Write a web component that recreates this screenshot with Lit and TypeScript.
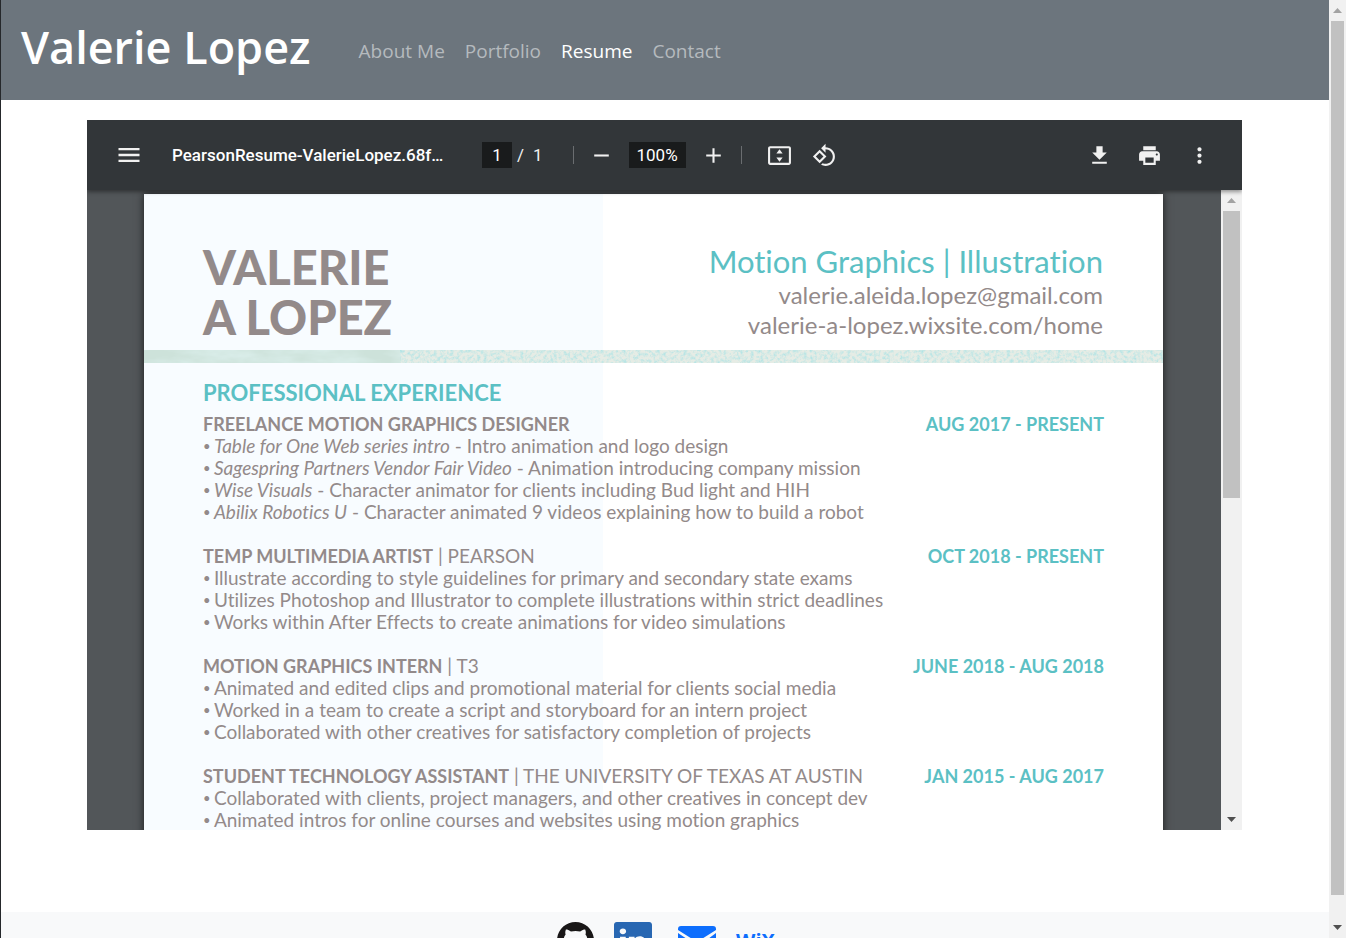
import { LitElement, html, css, svg } from "lit";
import { customElement, property } from "lit/decorators.js";

interface Bullet {
  lead?: string;
  text: string;
}

interface Job {
  title: string;
  place?: string;
  dates: string;
  bullets: Bullet[];
}

const NAV = ["About Me", "Portfolio", "Resume", "Contact"];

const JOBS: Job[] = [
  {
    title: "FREELANCE MOTION GRAPHICS DESIGNER",
    dates: "AUG 2017 - PRESENT",
    bullets: [
      { lead: "Table for One Web series intro", text: "Intro animation and logo design" },
      { lead: "Sagespring Partners Vendor Fair Video", text: "Animation introducing company mission" },
      { lead: "Wise Visuals", text: "Character animator for clients including Bud light and HIH" },
      { lead: "Abilix Robotics U", text: "Character animated 9 videos explaining how to build a robot" },
    ],
  },
  {
    title: "TEMP MULTIMEDIA ARTIST",
    place: "PEARSON",
    dates: "OCT 2018 - PRESENT",
    bullets: [
      { text: "Illustrate according to style guidelines for primary and secondary state exams" },
      { text: "Utilizes Photoshop and Illustrator to complete illustrations within strict deadlines" },
      { text: "Works within After Effects to create animations for video simulations" },
    ],
  },
  {
    title: "MOTION GRAPHICS INTERN",
    place: "T3",
    dates: "JUNE 2018 - AUG 2018",
    bullets: [
      { text: "Animated and edited clips and promotional material for clients social media" },
      { text: "Worked in a team to create a script and storyboard for an intern project" },
      { text: "Collaborated with other creatives for satisfactory completion of projects" },
    ],
  },
  {
    title: "STUDENT TECHNOLOGY ASSISTANT",
    place: "THE UNIVERSITY OF TEXAS AT AUSTIN",
    dates: "JAN 2015 - AUG 2017",
    bullets: [
      { text: "Collaborated with clients, project managers, and other creatives in concept dev" },
      { text: "Animated intros for online courses and websites using motion graphics" },
    ],
  },
];

const icon = (d: string, size = 25) =>
  html`<svg width=${size} height=${size} viewBox="0 0 24 24" fill="currentColor" aria-hidden="true">${svg`<path d=${d} />`}</svg>`;

const ICONS = {
  menu: "M3 18h18v-2H3v2zm0-5h18v-2H3v2zm0-7v2h18V6H3z",
  minus: "M19 13H5v-2h14v2z",
  plus: "M19 13h-6v6h-2v-6H5v-2h6V5h2v6h6v2z",
  fit: "M21 3H3c-1.1 0-2 .9-2 2v14c0 1.100.9 2 2 2h18c1.100 0 2-.9 2-2V5c0-1.100-.9-2-2-2zm0 16H3V5h18v14zM12 6l-3 4h6zM12 18l3-4H9z",
  rotate:
    "M7.34 6.41L.86 12.9l6.49 6.48 6.49-6.48-6.5-6.49zM3.69 12.9l3.66-3.66L11 12.9l-3.66 3.66-3.65-3.66zm15.67-6.26C17.61 4.88 15.3 4 13 4V.76L8.76 5 13 9.24V6c1.79 0 3.58.68 4.95 2.05 2.73 2.73 2.73 7.17 0 9.9C16.58 19.32 14.79 20 13 20c-.97 0-1.94-.21-2.84-.61l-1.49 1.49C10.02 21.62 11.51 22 13 22c2.3 0 4.61-.88 6.36-2.64 3.52-3.51 3.52-9.21 0-12.72z",
  download: "M19 9h-4V3H9v6H5l7 7 7-7zM5 18v2h14v-2H5z",
  print:
    "M19 8H5c-1.66 0-3 1.34-3 3v6h4v4h12v-4h4v-6c0-1.66-1.34-3-3-3zm-3 11H8v-5h8v5zm3-7c-.55 0-1-.45-1-1s.45-1 1-1 1 .45 1 1-.45 1-1 1zm-1-9H6v4h12V3z",
  more: "M12 8c1.100 0 2-.9 2-2s-.9-2-2-2-2 .9-2 2 .9 2 2 2zm0 2c-1.100 0-2 .9-2 2s.9 2 2 2 2-.9 2-2-.9-2-2-2zm0 6c-1.100 0-2 .9-2 2s.9 2 2 2 2-.9 2-2-.9-2-2-2z",
};

@customElement("scroll-rail")
class ScrollRail extends LitElement {
  @property({ type: Number }) visible = 50;

  static styles = css`
    :host {
      display: flex;
      flex-direction: column;
      background: #f1f1f1;
    }
    .arrow {
      flex: none;
      height: 21px;
      display: grid;
      place-items: center;
      color: #505050;
    }
    .arrow.off {
      color: #a3a3a3;
    }
    .track {
      flex: 1;
      min-height: 0;
      padding: 0 2px;
    }
    .thumb {
      background: #c1c1c1;
    }
  `;

  render() {
    return html`
      <div class="arrow off">
        <svg width="9" height="5" viewBox="0 0 9 5" fill="currentColor"><path d="M4.500 0L9 5H0z" /></svg>
      </div>
      <div class="track"><div class="thumb" style="height:${this.visible}%"></div></div>
      <div class="arrow">
        <svg width="9" height="5" viewBox="0 0 9 5" fill="currentColor"><path d="M4.500 5L0 0h9z" /></svg>
      </div>
    `;
  }
}

@customElement("resume-page")
class ResumePage extends LitElement {
  static styles = css`
    :host {
      display: block;
      background: linear-gradient(90deg, #f8fcff 45%, #ffffff 45%);
      color: #938a8a;
      font-family: "Lato", sans-serif;
      font-size: 19px;
      line-height: 22px;
      font-variant-ligatures: none;
    }
    .top {
      display: flex;
      justify-content: space-between;
      padding: 48px 60px 8px 59px;
    }
    h1 {
      margin: 0;
      font-size: 47px;
      line-height: 50px;
      font-weight: 900;
    }
    .contact {
      text-align: right;
      font-size: 24px;
      line-height: 30px;
    }
    .role {
      margin: 0;
      font-size: 31px;
      line-height: 38px;
      color: #5bc0c4;
    }
    .contact div {
      white-space: nowrap;
    }
    .band {
      display: block;
      width: 100%;
      height: 13px;
    }
    .body {
      padding: 16px 59px 0;
    }
    h2 {
      margin: 0 0 6px;
      font-size: 22px;
      line-height: 28px;
      font-weight: 700;
      color: #5bc0c4;
    }
    section {
      margin-bottom: 22px;
    }
    .head {
      display: flex;
      justify-content: space-between;
      height: 22px;
    }
    h3 {
      margin: 0;
      font-size: 19px;
      font-weight: 400;
    }
    h3 b,
    .dates {
      font-size: 18px;
      font-weight: 700;
    }
    .dates {
      color: #5bc0c4;
    }
    ul {
      margin: 0;
      padding: 0;
      list-style: none;
    }
    li {
      white-space: nowrap;
    }
    li::before {
      content: "• ";
      font-size: 13px;
      line-height: 0;
      vertical-align: 2px;
    }
  `;

  render() {
    return html`
      <div class="top">
        <h1>VALERIE<br />A LOPEZ</h1>
        <div class="contact">
          <p class="role">Motion Graphics | Illustration</p>
          <div>valerie.aleida.lopez@gmail.com</div>
          <div>valerie-a-lopez.wixsite.com/home</div>
        </div>
      </div>
      <svg class="band" aria-hidden="true">
        <filter id="grain" x="0" y="0" width="100%" height="100%">
          <feTurbulence type="fractalNoise" baseFrequency="0.3" numOctaves="4" seed="4" />
          <feColorMatrix values="0 0 0 0 0.42  0 0 0 0 0.77  0 0 0 0 0.78  2 0 0 0 -0.8" />
        </filter>
        <filter id="wash" x="0" y="0" width="100%" height="100%">
          <feTurbulence type="fractalNoise" baseFrequency="0.02 0.06" numOctaves="4" seed="9" />
          <feColorMatrix values="0 0 0 0 0.72  0 0 0 0 0.87  0 0 0 0 0.85  2 0 0 0 -0.6" />
        </filter>
        <rect width="100%" height="13" fill="#e6ece5" />
        <rect width="25.200%" height="13" fill="#cde2da" />
        <rect width="25.200%" height="13" filter="url(#wash)" />
        <rect x="25.200%" width="74.800%" height="13" filter="url(#grain)" />
      </svg>
      <div class="body">
        <h2>PROFESSIONAL EXPERIENCE</h2>
        ${JOBS.map(
          (job) => html`
            <section>
              <div class="head">
                <h3><b>${job.title}</b>${job.place ? html` | ${job.place}` : ""}</h3>
                <span class="dates">${job.dates}</span>
              </div>
              <ul>
                ${job.bullets.map((b) => html`<li>${b.lead ? html`<i>${b.lead}</i> - ` : ""}${b.text}</li>`)}
              </ul>
            </section>
          `
        )}
      </div>
    `;
  }
}

@customElement("pdf-viewer")
class PdfViewer extends LitElement {
  static styles = css`
    :host {
      display: flex;
      flex-direction: column;
      overflow: hidden;
      background: #525659;
      font-family: "Roboto", sans-serif;
    }
    .bar {
      position: relative;
      z-index: 1;
      flex: none;
      height: 70px;
      box-sizing: border-box;
      padding: 0 30px 0 28px;
      display: flex;
      align-items: center;
      justify-content: space-between;
      background: #323639;
      color: #f1f1f1;
      font-size: 17px;
      box-shadow: 0 2px 4px rgba(0, 0, 0, 0.4);
    }
    .group,
    .pages,
    .zoom {
      display: flex;
      align-items: center;
    }
    button {
      display: grid;
      place-items: center;
      padding: 0;
      border: 0;
      background: none;
      color: inherit;
    }
    .name {
      width: 278px;
      margin: 0 32px 0 29px;
      font-weight: 500;
      color: #ffffff;
      white-space: nowrap;
    }
    input {
      box-sizing: border-box;
      height: 26px;
      padding: 0;
      border: 0;
      background: #191b1c;
      color: #ffffff;
      font: inherit;
      text-align: center;
    }
    .page {
      width: 30px;
    }
    .level {
      width: 57px;
    }
    .pages {
      gap: 5px;
    }
    .total {
      padding-left: 4px;
    }
    .rule {
      width: 1px;
      height: 18px;
      margin: 0 15px 0 30px;
      background: #6a6d70;
    }
    .zoom {
      gap: 15px;
    }
    .zoom + .rule {
      margin: 0 25px 0 15px;
    }
    .view {
      gap: 20px;
    }
    .actions {
      gap: 25px;
    }
    .stage {
      flex: 1;
      min-height: 0;
      display: flex;
    }
    .canvas {
      flex: 1;
      min-width: 0;
      overflow: hidden;
      padding: 4px 58px 0 57px;
    }
    resume-page {
      min-height: 1300px;
      box-shadow: 0 0 8px rgba(0, 0, 0, 0.7);
    }
    scroll-rail {
      width: 21px;
    }
  `;

  render() {
    return html`
      <div class="bar">
        <div class="group">
          <button aria-label="Menu">${icon(ICONS.menu, 28)}</button>
          <div class="name">PearsonResume-ValerieLopez.68f…</div>
          <div class="pages">
            <input class="page" aria-label="Page number" value="1" />
            <span>/</span>
            <span class="total">1</span>
          </div>
          <span class="rule"></span>
          <div class="zoom">
            <button aria-label="Zoom out">${icon(ICONS.minus)}</button>
            <input class="level" aria-label="Zoom level" value="100%" />
            <button aria-label="Zoom in">${icon(ICONS.plus)}</button>
          </div>
          <span class="rule"></span>
          <div class="group view">
            <button aria-label="Fit to page">${icon(ICONS.fit)}</button>
            <button aria-label="Rotate">${icon(ICONS.rotate)}</button>
          </div>
        </div>
        <div class="group actions">
          <button aria-label="Download">${icon(ICONS.download)}</button>
          <button aria-label="Print">${icon(ICONS.print)}</button>
          <button aria-label="More actions">${icon(ICONS.more)}</button>
        </div>
      </div>
      <div class="stage">
        <div class="canvas"><resume-page></resume-page></div>
        <scroll-rail .visible=${48}></scroll-rail>
      </div>
    `;
  }
}

@customElement("app-root")
class AppRoot extends LitElement {
  static styles = css`
    :host {
      display: flex;
      height: 100vh;
      overflow: hidden;
      box-sizing: border-box;
      border-left: 1px solid #25282b;
      background: #ffffff;
      font-family: "Open Sans", sans-serif;
    }
    .site {
      flex: 1;
      min-width: 0;
      overflow: hidden;
    }
    scroll-rail {
      width: 17px;
    }
    header {
      display: flex;
      align-items: center;
      height: 100px;
      box-sizing: border-box;
      padding: 0 20px 6px;
      background: #6c757d;
    }
    .brand {
      margin-right: 48px;
      color: #ffffff;
      font-size: 45px;
      line-height: 64px;
      font-weight: 600;
      text-decoration: none;
    }
    nav {
      display: flex;
      gap: 20px;
      padding-top: 8px;
      font-size: 19px;
      line-height: 30px;
    }
    nav a {
      color: #b5babe;
      text-decoration: none;
    }
    nav a[aria-current] {
      color: #ffffff;
    }
    main {
      padding: 20px 87px 82px 86px;
    }
    pdf-viewer {
      height: 710px;
    }
    footer {
      display: flex;
      justify-content: center;
      gap: 20px;
      padding: 10px 0 20px 2px;
      background: #f8f9fa;
    }
    footer a {
      display: block;
      height: 38px;
      color: #0d6efd;
      text-decoration: none;
    }
    .mail {
      margin-left: 6px;
    }
    .wix {
      font-size: 20px;
      line-height: 38px;
      font-weight: 700;
    }
  `;

  render() {
    return html`
      <div class="site">
        <header>
          <a class="brand" href="#">Valerie Lopez</a>
          <nav>
            ${NAV.map((n) =>
              n === "Resume" ? html`<a href="#" aria-current="page">${n}</a>` : html`<a href="#">${n}</a>`
            )}
          </nav>
        </header>
        <main><pdf-viewer></pdf-viewer></main>
        <footer>
          <a href="#" aria-label="GitHub">
            <svg width="37" height="38" viewBox="0 0 16 16" fill="#191717" preserveAspectRatio="xMidYMin meet">
              <path
                d="M8 0C3.580 0 0 3.580 0 8c0 3.540 2.290 6.530 5.470 7.590.4.070.550-.170.550-.380 0-.190-.010-.820-.010-1.490-2.010.370-2.530-.490-2.690-.940-.090-.230-.480-.940-.820-1.130-.280-.150-.680-.520-.010-.530.630-.010 1.080.580 1.230.820.720 1.210 1.870.870 2.330.660.070-.520.280-.870.510-1.070-1.780-.2-3.640-.890-3.640-3.950 0-.870.310-1.590.820-2.150-.080-.2-.360-1.020.080-2.120 0 0 .670-.210 2.200.820.640-.180 1.320-.270 2-.270s1.360.090 2 .270c1.530-1.040 2.200-.820 2.200-.820.440 1.100.160 1.920.080 2.120.510.560.820 1.270.820 2.150 0 3.070-1.870 3.750-3.650 3.950.290.250.540.730.540 1.480 0 1.070-.010 1.930-.010 2.200 0 .210.150.460.550.380A8.010 8.010 0 0 0 16 8c0-4.420-3.580-8-8-8"
              />
            </svg>
          </a>
          <a href="#" aria-label="LinkedIn">
            <svg width="38" height="38" viewBox="0 0 16 16" fill="#2867b2">
              <path
                d="M0 1.146C0 .513.526 0 1.175 0h13.650C15.474 0 16 .513 16 1.146v13.708c0 .633-.526 1.146-1.175 1.146H1.175C.526 16 0 15.487 0 14.854zm4.943 12.248V6.169H2.542v7.225zm-1.200-8.212c.837 0 1.358-.554 1.358-1.248-.015-.709-.520-1.248-1.342-1.248S2.400 3.226 2.400 3.934c0 .694.521 1.248 1.327 1.248zm4.908 8.212V9.359c0-.216.016-.432.080-.586.173-.431.568-.878 1.232-.878.869 0 1.216.662 1.216 1.634v3.865h2.401V9.250c0-2.220-1.184-3.252-2.764-3.252-1.274 0-1.845.7-2.165 1.193v.025h-.016l.016-.025V6.169h-2.400c.030.678 0 7.225 0 7.225z"
              />
            </svg>
          </a>
          <a class="mail" href="#" aria-label="Email">
            <svg width="38" height="38" viewBox="0 0 38 38" fill="currentColor">
              <path d="M3 4h32a3 3 0 0 1 3 3v1L19 20 0 8V7a3 3 0 0 1 3-3zM0 11l12 8L0 28zM38 11v17l-12-8zM14 20l5 3 5-3 14 10a3 3 0 0 1-3 3H3a3 3 0 0 1-3-3z" />
            </svg>
          </a>
          <a class="wix" href="#">WiX</a>
        </footer>
      </div>
      <scroll-rail .visible=${97.5}></scroll-rail>
    `;
  }
}
